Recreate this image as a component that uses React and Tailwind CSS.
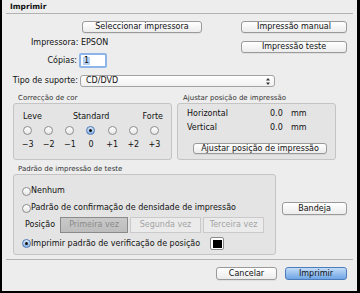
import React from "react";

const btn =
  "flex items-center justify-center rounded-[3px] border border-[#9a9a9a] bg-linear-to-b from-white to-[#ececec] text-[8px] leading-none text-[#111] shadow-[0_1px_0_rgba(0,0,0,0.06)]";

function Radio({ checked }) {
  if (checked) {
    return (
      <span className="flex h-[9px] w-[9px] shrink-0 items-center justify-center rounded-full border border-[#4f78b4] bg-linear-to-b from-[#d6e7fa] to-[#86b3e6]">
        <span className="h-[3px] w-[3px] rounded-full bg-[#111]" />
      </span>
    );
  }
  return (
    <span className="h-[9px] w-[9px] shrink-0 rounded-full border border-[#8c8c8c] bg-linear-to-b from-white to-[#e6e6e6]" />
  );
}

function Arrows() {
  return (
    <svg width="4" height="7" viewBox="0 0 4 7">
      <path d="M2 0 L4 2.5 L0 2.5 Z" fill="#333" />
      <path d="M2 7 L4 4.5 L0 4.5 Z" fill="#333" />
    </svg>
  );
}

const steps = ["−3", "−2", "−1", "0", "+1", "+2", "+3"];

export default function App() {
  return (
    <div className="h-[293px] w-[360px] bg-black pb-[2px] pl-[2px] pr-[3px] font-['DejaVu_Sans',sans-serif] text-[8px] leading-none text-[#111]">
      <div className="flex h-full flex-col bg-[#ededed]">
        {/* title */}
        <div className="flex h-[13px] items-center pl-[8px] text-[7.5px] font-bold">Imprimir</div>
        <div className="mx-[4px] h-px bg-[#b2b2b2]" />

        {/* printer */}
        <div className="flex">
          <div className="flex w-[239px] flex-col">
            <div className={`${btn} ml-[80px] mt-[7px] h-[12px] w-[120px]`}>Seleccionar impressora</div>
            <div className="mt-[6px] flex h-[8px] items-center pl-[29px]">Impressora: EPSON</div>
            <div className="mt-[6px] flex h-[15px] items-center">
              <span className="w-[75px] text-right">Cópias:</span>
              <div className="ml-[2px] flex h-[15px] w-[28px] items-center rounded-[2px] border-2 border-[#8db5ea] bg-white pl-[2px]">
                <span className="bg-[#b4d2f6] px-px">1</span>
              </div>
            </div>
          </div>
          <div className="flex flex-col">
            <div className={`${btn} mt-[7px] h-[12px] w-[106px]`}>Impressão manual</div>
            <div className={`${btn} mt-[8px] h-[12px] w-[106px]`}>Impressão teste</div>
          </div>
        </div>

        {/* media type */}
        <div className="mt-[7px] flex h-[12px] items-center">
          <span className="w-[76px] text-right">Tipo de suporte:</span>
          <div className="ml-[2px] flex h-[12px] w-[195px] items-center justify-between rounded-[3px] border border-[#a2a2a2] bg-linear-to-b from-white to-[#f0f0f0] pl-[5px] pr-[4px]">
            <span>CD/DVD</span>
            <Arrows />
          </div>
        </div>

        {/* colour + position */}
        <div className="mt-[8px] flex">
          <div className="ml-[11px] flex w-[159px] flex-col">
            <div className="h-[8px] pl-[5px] text-[7px] text-[#333]">Correcção de cor</div>
            <div className="h-[57px] rounded-[3px] border border-[#c4c4c4] bg-[#e4e4e4]">
              <div className="mt-[9px] flex h-[8px] items-center pr-[8px]">
                <span className="w-[59px] pl-[9px]">Leve</span>
                <span>Standard</span>
                <span className="ml-auto">Forte</span>
              </div>
              <div className="mt-[5px] grid grid-cols-7 pl-[3px] pr-[6px]">
                {steps.map((s) => (
                  <div key={s} className="flex justify-center">
                    <Radio checked={s === "0"} />
                  </div>
                ))}
              </div>
              <div className="mt-[6px] grid h-[8px] grid-cols-7 items-center pl-[3px] pr-[6px]">
                {steps.map((s) => (
                  <div key={s} className="text-center">
                    {s}
                  </div>
                ))}
              </div>
            </div>
          </div>
          <div className="ml-[5px] flex w-[159px] flex-col">
            <div className="h-[8px] pl-[6px] text-[7px] text-[#333]">Ajustar posição de impressão</div>
            <div className="h-[57px] rounded-[3px] border border-[#c4c4c4] bg-[#e4e4e4]">
              <div className="mt-[6px] flex h-[8px] items-center pl-[9px]">
                <span className="w-[83px]">Horizontal</span>
                <span className="w-[21px]">0.0</span>
                <span>mm</span>
              </div>
              <div className="mt-[6px] flex h-[8px] items-center pl-[9px]">
                <span className="w-[83px]">Vertical</span>
                <span className="w-[21px]">0.0</span>
                <span>mm</span>
              </div>
              <div className={`${btn} ml-[15px] mt-[11px] h-[11px] w-[134px]`}>Ajustar posição de impressão</div>
            </div>
          </div>
        </div>

        {/* test pattern */}
        <div className="mt-[6px] flex">
          <div className="ml-[11px] flex w-[263px] flex-col">
            <div className="h-[8px] pl-[5px] text-[7px] text-[#333]">Padrão de impressão de teste</div>
            <div className="h-[81px] rounded-[3px] border border-[#c4c4c4] bg-[#e4e4e4]">
              <div className="mt-[12px] flex h-[8px] items-center pl-[8px]">
                <Radio />
                <span>Nenhum</span>
              </div>
              <div className="mt-[9px] flex h-[8px] items-center pl-[8px]">
                <Radio />
                <span>Padrão de confirmação de densidade de impressão</span>
              </div>
              <div className="mt-[5px] flex h-[16px] items-center pl-[11px]">
                <span className="w-[35px]">Posição</span>
                <div className="flex h-[16px] w-[68px] items-center justify-center border border-[#8a8a8a] bg-linear-to-b from-[#c9c9c9] to-[#bdbdbd] text-[#8a8a8a]">
                  Primeira vez
                </div>
                <div className="ml-[2px] flex h-[16px] w-[71px] items-center justify-center border border-[#cacaca] bg-[#ebebeb] text-[#a3a3a3]">
                  Segunda vez
                </div>
                <div className="ml-[2px] flex h-[16px] w-[61px] items-center justify-center border border-[#cacaca] bg-[#ebebeb] text-[#a3a3a3]">
                  Terceira vez
                </div>
              </div>
              <div className="mt-[4px] flex h-[13px] items-center pl-[8px]">
                <Radio checked />
                <span>Imprimir padrão de verificação de posição</span>
                <div className="ml-[10px] flex h-[13px] w-[14px] items-center justify-center rounded-[2px] border border-[#8a8a8a] bg-white">
                  <div className="h-[8px] w-[9px] bg-black" />
                </div>
              </div>
            </div>
          </div>
          <div className={`${btn} ml-[6px] mt-[36px] h-[13px] w-[65px]`}>Bandeja</div>
        </div>

        {/* footer */}
        <div className="mx-[4px] mt-[4px] h-px bg-[#b2b2b2]" />
        <div className="mt-[7px] flex justify-end gap-[8px] pr-[10px]">
          <div className={`${btn} h-[13px] w-[61px]`}>Cancelar</div>
          <div className="flex h-[13px] w-[62px] items-center justify-center rounded-[3px] border border-[#4d7cbd] bg-linear-to-b from-[#c3dcf7] to-[#6ea5e4] text-[8px] text-[#111]">
            Imprimir
          </div>
        </div>
      </div>
    </div>
  );
}
